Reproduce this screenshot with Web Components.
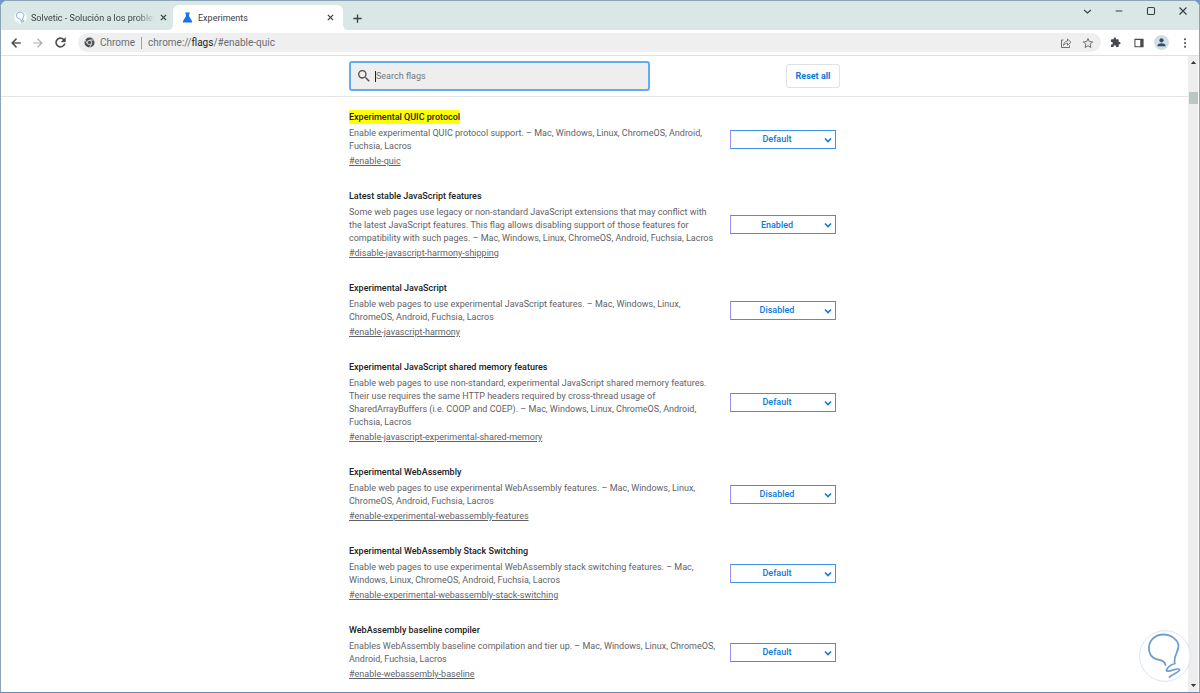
<!DOCTYPE html>
<html lang="es">
<head>
<meta charset="utf-8">
<title>Experiments</title>
<style>
    html, body {
        height: 100%;
        margin: 0;
        background: #6f97cb;
    }
    body {
        font-family: Roboto, "Liberation Sans", sans-serif;
        font-size: 9px;
        color: #5f6368;
        overflow: hidden;
    }
</style>
</head>
<body>
<browser-window>
    <tab-strip slot="tabs">
        <browser-tab icon="bulb">Solvetic - Solución a los problemas</browser-tab>
        <browser-tab icon="flask" active>Experiments</browser-tab>
    </tab-strip>
    <tool-bar slot="toolbar"></tool-bar>
    <flags-page>
        <flag-item name="Experimental QUIC protocol" anchor="enable-quic" value="Default" highlight>Enable experimental QUIC protocol support. – Mac, Windows, Linux, ChromeOS, Android, Fuchsia, Lacros</flag-item>
        <flag-item name="Latest stable JavaScript features" anchor="disable-javascript-harmony-shipping" value="Enabled">Some web pages use legacy or non-standard JavaScript extensions that may conflict with the latest JavaScript features. This flag allows disabling support of those features for compatibility with such pages. – Mac, Windows, Linux, ChromeOS, Android, Fuchsia, Lacros</flag-item>
        <flag-item name="Experimental JavaScript" anchor="enable-javascript-harmony" value="Disabled">Enable web pages to use experimental JavaScript features. – Mac, Windows, Linux, ChromeOS, Android, Fuchsia, Lacros</flag-item>
        <flag-item name="Experimental JavaScript shared memory features" anchor="enable-javascript-experimental-shared-memory" value="Default">Enable web pages to use non-standard, experimental JavaScript shared memory features. Their use requires the same HTTP headers required by cross-thread usage of SharedArrayBuffers (i.e. COOP and COEP). – Mac, Windows, Linux, ChromeOS, Android, Fuchsia, Lacros</flag-item>
        <flag-item name="Experimental WebAssembly" anchor="enable-experimental-webassembly-features" value="Disabled">Enable web pages to use experimental WebAssembly features. – Mac, Windows, Linux, ChromeOS, Android, Fuchsia, Lacros</flag-item>
        <flag-item name="Experimental WebAssembly Stack Switching" anchor="enable-experimental-webassembly-stack-switching" value="Default">Enable web pages to use experimental WebAssembly stack switching features. – Mac, Windows, Linux, ChromeOS, Android, Fuchsia, Lacros</flag-item>
        <flag-item name="WebAssembly baseline compiler" anchor="enable-webassembly-baseline" value="Default">Enables WebAssembly baseline compilation and tier up. – Mac, Windows, Linux, ChromeOS, Android, Fuchsia, Lacros</flag-item>
    </flags-page>
</browser-window>

<script>
const ICONS = {
    bulb: '<circle cx="12" cy="12" r="11.7" fill="#fff" fill-opacity=".8" stroke="#d5e2f0" stroke-width=".4"/><g transform="scale(.4615) translate(-18.500 -20)"><path d="M45 55C44 51 41 50 37 49.500 30 48 28 42 28.500 37 29 29 36 24.500 43 24.500 51 24.500 57 30 58 35 58.500 42 53.500 44 54 52L54.300 53.500C50 55 46.500 58 46 60.500 46.500 63 58 57 59 59.500 59.500 62 53 63.500 49 67" fill="none" stroke="#6f9fd1" stroke-width="STROKE" stroke-linecap="round"/></g>',
    flask: '<path d="M7 1h10v3h-1.500v5L22 20c.6 1.500 0 3-1.500 3h-17C2 23 1.400 21.500 2 20L8.500 9V4H7z" fill="#1a73e8"/>',
    close: '<path d="M5 5l14 14M19 5L5 19" stroke="currentColor" stroke-width="STROKE" fill="none"/>',
    plus: '<path d="M12 3v18M3 12h18" stroke="currentColor" stroke-width="3" fill="none"/>',
    down: '<path d="M3 8l9 8 9-8" stroke="currentColor" stroke-width="3" fill="none"/>',
    minimize: '<path d="M2 12h20" stroke="currentColor" stroke-width="3"/>',
    maximize: '<rect x="3.500" y="3.500" width="17" height="17" rx="3" stroke="currentColor" stroke-width="2.600" fill="none"/>',
    back: '<path d="M20 11H7.800l5.600-5.600L12 4l-8 8 8 8 1.400-1.400L7.800 13H20z" fill="currentColor" stroke="currentColor" stroke-width=".6"/>',
    forward: '<path d="M12 4l-1.400 1.400L16.200 11H4v2h12.200l-5.600 5.600L12 20l8-8z" fill="currentColor"/>',
    reload: '<path d="M17.700 6.300A8 8 0 1 0 19.700 14h-2.100A6 6 0 1 1 16.200 7.800L13 11h7V4z" fill="currentColor" stroke="currentColor" stroke-width=".6"/>',
    chrome: '<circle cx="12" cy="12" r="11" fill="#4d5156"/><circle cx="12" cy="12" r="5.400" fill="#efefef"/><circle cx="12" cy="12" r="3.700" fill="#4d5156"/><path d="M12 6.600h9.500M7.300 14.700L2.600 6.500M16.700 14.700L12 23" stroke="#efefef" stroke-width="1.800"/>',
    share: '<path d="M7 6H3v15h16v-4" fill="none" stroke="currentColor" stroke-width="2"/><path d="M7 17c.4-5 3-8.500 8-9V4l7 6.500-7 6V12.500c-3.500 0-6 1.500-8 4.500z" fill="none" stroke="currentColor" stroke-width="1.800" stroke-linejoin="round"/>',
    star: '<path d="M12 3l2.600 6.300 6.800.6-5.200 4.500 1.600 6.600-5.800-3.500L6.200 21l1.600-6.600-5.200-4.500 6.800-.6z" fill="none" stroke="currentColor" stroke-width="2"/>',
    puzzle: '<path d="M20.500 11H19V7a2 2 0 0 0-2-2h-4V3.500a2.500 2.500 0 0 0-5 0V5H4a2 2 0 0 0-2 2v3.800h1.500a2.700 2.700 0 0 1 0 5.400H2V20a2 2 0 0 0 2 2h3.800v-1.500a2.700 2.700 0 0 1 5.400 0V22H17a2 2 0 0 0 2-2v-4h1.500a2.500 2.500 0 0 0 0-5z" fill="currentColor"/>',
    panel: '<path d="M1 2h22v20H1zM3.500 4.500v15H15v-15z" fill="currentColor" fill-rule="evenodd"/>',
    user: '<circle cx="12" cy="12" r="12" fill="#cfe0e3"/><circle cx="12" cy="8.500" r="3.300" fill="#3b4a6b"/><path d="M5.500 18v-1.300c0-2.500 4-3.700 6.500-3.700s6.500 1.200 6.500 3.700V18z" fill="#3b4a6b"/>',
    menu: '<g fill="currentColor"><circle cx="12" cy="3" r="2.400"/><circle cx="12" cy="12" r="2.400"/><circle cx="12" cy="21" r="2.400"/></g>',
    search: '<path d="M15.500 14h-.8l-.3-.3A6.500 6.500 0 1 0 13.700 14.400l.3.3v.8l5 5 1.500-1.500zm-6 0a4.500 4.500 0 1 1 0-9 4.500 4.500 0 0 1 0 9z" fill="currentColor"/>',
    up: '<path d="M3 17l9-10 9 10z" fill="currentColor"/>',
    downFill: '<path d="M3 7l9 10 9-10z" fill="currentColor"/>'
};

function icon(name, size, stroke = 2.6) {
    return `<svg width="${size}" height="${size}" viewBox="0 0 24 24" aria-hidden="true">${ICONS[name].replace('STROKE', stroke)}</svg>`;
}

const BASE = `
    * { box-sizing: border-box; }
    svg { display: block; flex: none; }
    button {
        display: flex;
        align-items: center;
        justify-content: center;
        padding: 0;
        border: 0;
        background: none;
        color: inherit;
        font: inherit;
    }
`;

class BrowserWindow extends HTMLElement {
    constructor() {
        super();
        this.attachShadow({ mode: 'open' }).innerHTML = `
            <style>
                ${BASE}
                :host {
                    display: flex;
                    flex-direction: column;
                    box-sizing: border-box;
                    height: 100vh;
                    border: 1px solid #8ba5b7;
                    border-bottom-color: #6688b5;
                    border-radius: 7px 7px 0 0;
                    background: #fff;
                    overflow: hidden;
                }
                .view { flex: 1; min-height: 0; display: flex; }
                .page { flex: 1; min-width: 0; overflow: hidden; }
                .scroll {
                    display: flex;
                    flex-direction: column;
                    align-items: center;
                    width: 10px;
                    padding: 3px 0;
                    background: #eee;
                    color: #303540;
                    margin-right: 1px;
                }
                .thumb { width: 9px; height: 12px; margin: 26px 0 auto; background: #b9c6c3; }
                .mark { position: absolute; right: 9px; bottom: 11px; }
            </style>
            <slot name="tabs"></slot>
            <slot name="toolbar"></slot>
            <div class="view">
                <div class="page"><slot></slot></div>
                <div class="scroll">${icon('up', 7)}<div class="thumb"></div>${icon('downFill', 7)}</div>
            </div>
            <div class="mark">${icon('bulb', 52, 1.8)}</div>
        `;
    }
}

class TabStrip extends HTMLElement {
    constructor() {
        super();
        this.attachShadow({ mode: 'open' }).innerHTML = `
            <style>
                ${BASE}
                :host {
                    display: flex;
                    height: 29px;
                    background: #d9e7e6;
                    color: #3c4043;
                }
                .tabs { display: flex; align-items: flex-end; padding-left: 4px; }
                .new { width: 28px; padding-top: 5px; }
                .controls { display: flex; margin-left: auto; height: 20px; }
                .controls button { width: 32px; }
            </style>
            <div class="tabs"><slot></slot></div>
            <button class="new" aria-label="New tab">${icon('plus', 11)}</button>
            <div class="controls">
                <button aria-label="Search tabs">${icon('down', 9)}</button>
                <button aria-label="Minimize">${icon('minimize', 8)}</button>
                <button aria-label="Maximize">${icon('maximize', 10)}</button>
                <button aria-label="Close">${icon('close', 12, 2.4)}</button>
            </div>
        `;
    }
}

class BrowserTab extends HTMLElement {
    constructor() {
        super();
        this.attachShadow({ mode: 'open' });
    }

    connectedCallback() {
        this.shadowRoot.innerHTML = `
            <style>
                ${BASE}
                :host {
                    position: relative;
                    display: flex;
                    align-items: center;
                    box-sizing: border-box;
                    width: 168px;
                    height: 25px;
                    padding: 0 5px 0 9px;
                    gap: 4px;
                    border-radius: 6px 6px 0 0;
                    line-height: 12px;
                }
                :host([active]) { width: 170px; padding-right: 8px; gap: 5px; background: #fff; }
                :host([active])::before, :host([active])::after {
                    content: "";
                    position: absolute;
                    bottom: 0;
                    width: 5px;
                    height: 5px;
                }
                :host([active])::before { right: 100%; background: radial-gradient(circle at 0 0, transparent 5px, #fff 5px); }
                :host([active])::after { left: 100%; background: radial-gradient(circle at 100% 0, transparent 5px, #fff 5px); }
                span { flex: 1; overflow: hidden; white-space: nowrap; }
                :host(:not([active])) span { mask-image: linear-gradient(to left, transparent, #000 18px); }
                button { width: 9px; }
            </style>
            ${icon(this.getAttribute('icon'), this.getAttribute('icon') == 'bulb' ? 13 : 11, 3.4)}
            <span><slot></slot></span>
            <button aria-label="Close tab">${icon('close', 9, 3.4)}</button>
        `;
    }
}

class ToolBar extends HTMLElement {
    constructor() {
        super();
        this.attachShadow({ mode: 'open' }).innerHTML = `
            <style>
                ${BASE}
                :host {
                    display: flex;
                    align-items: center;
                    box-sizing: border-box;
                    height: 26px;
                    padding: 0 4px;
                    border-bottom: 1px solid #dfe1e3;
                    color: #46494d;
                    font-size: 10px;
                    line-height: 12px;
                }
                nav, .actions { display: flex; }
                nav button { width: 22px; }
                .off { color: #a9acb0; }
                .address {
                    flex: 1;
                    display: flex;
                    align-items: center;
                    height: 19px;
                    margin-left: 7px;
                    padding: 0 5px 0 6px;
                    border-radius: 10px;
                    background: #efefef;
                    color: #696d72;
                }
                .site { padding: 0 6px 0 5px; border-right: 1px solid #a0a3a6; }
                .url { flex: 1; padding-left: 6px; }
                b { font-weight: 400; color: #202124; }
                .address button { width: 16px; margin-left: 6px; }
                .actions button { width: 23px; }
                .actions { margin-left: 3px; margin-right: -1px; }
            </style>
            <nav>
                <button aria-label="Back">${icon('back', 14)}</button>
                <button class="off" aria-label="Forward">${icon('forward', 14)}</button>
                <button aria-label="Reload">${icon('reload', 15)}</button>
            </nav>
            <div class="address">
                ${icon('chrome', 11)}
                <span class="site">Chrome</span>
                <span class="url">chrome://<b>flags</b>/#enable-quic</span>
                <button aria-label="Share">${icon('share', 12)}</button>
                <button aria-label="Bookmark">${icon('star', 12)}</button>
            </div>
            <div class="actions">
                <button aria-label="Extensions">${icon('puzzle', 11)}</button>
                <button aria-label="Side panel">${icon('panel', 10)}</button>
                <button aria-label="Profile">${icon('user', 15)}</button>
                <button aria-label="Menu">${icon('menu', 10)}</button>
            </div>
        `;
    }
}

class FlagsPage extends HTMLElement {
    constructor() {
        super();
        this.attachShadow({ mode: 'open' }).innerHTML = `
            <style>
                ${BASE}
                :host { display: block; }
                header { padding: 5px 0; border-bottom: 1px solid #e4e5e7; }
                .bar, main { width: 491px; max-width: 100%; margin: 0 auto; }
                .bar { display: flex; align-items: center; justify-content: space-between; height: 30px; }
                .search {
                    display: flex;
                    align-items: center;
                    width: 301px;
                    height: 30px;
                    padding: 0 5px;
                    gap: 3px;
                    border: 2px solid #62acf0;
                    border-radius: 3px;
                    background: #eee;
                    color: #4a4d51;
                }
                input {
                    flex: 1;
                    min-width: 0;
                    padding: 0;
                    border: 0;
                    border-left: 1px solid #202124;
                    outline: 0;
                    background: none;
                    font: inherit;
                    line-height: 11px;
                }
                input::placeholder { color: #75787c; opacity: 1; }
                .reset {
                    width: 54px;
                    height: 24px;
                    border: 1px solid #dfe1e5;
                    border-radius: 3px;
                    color: #0b78db;
                    font-weight: 700;
                }
                main { padding-top: 13px; }
            </style>
            <header>
                <div class="bar">
                    <label class="search">${icon('search', 16)}<input type="text" placeholder="Search flags" aria-label="Search flags"></label>
                    <button class="reset">Reset all</button>
                </div>
            </header>
            <main><slot></slot></main>
        `;
    }
}

class FlagItem extends HTMLElement {
    constructor() {
        super();
        this.attachShadow({ mode: 'open' });
    }

    connectedCallback() {
        const name   = this.getAttribute('name');
        const anchor = this.getAttribute('anchor');
        const value  = this.getAttribute('value');
        const options = ['Default', 'Enabled', 'Disabled']
            .map(option => `<option${option == value ? ' selected' : ''}>${option}</option>`)
            .join('');

        this.shadowRoot.innerHTML = `
            <style>
                ${BASE}
                :host {
                    display: flex;
                    align-items: center;
                    justify-content: space-between;
                    padding-right: 4px;
                    margin-bottom: 21px;
                }
                .text { width: 372px; line-height: 13px; }
                label { display: table; line-height: 14px; font-weight: 500; color: #202124; }
                :host([highlight]) label { background: #ff0; }
                p { margin: 3px 0 1px; }
                a { display: table; line-height: 14px; color: inherit; text-decoration: underline; }
                .pick { position: relative; color: #0b78db; }
                select {
                    display: block;
                    width: 106px;
                    height: 19px;
                    padding: 0 12px 0 0;
                    appearance: none;
                    border: 1px solid #3d93e6;
                    border-left-color: #9a8ff0;
                    border-radius: 0;
                    background: #fff;
                    color: inherit;
                    font: inherit;
                    font-weight: 500;
                    text-align: center;
                    text-align-last: center;
                }
                .pick svg { position: absolute; right: 4px; top: 6px; pointer-events: none; }
            </style>
            <div class="text">
                <label for="state">${name}</label>
                <p><slot></slot></p>
                <a href="#${anchor}">#${anchor}</a>
            </div>
            <div class="pick">
                <select id="state">${options}</select>
                <svg width="8" height="8" viewBox="0 0 8 8" aria-hidden="true"><path d="M1 2.500l3 3 3-3" fill="none" stroke="currentColor" stroke-width="1.600"/></svg>
            </div>
        `;
    }
}

customElements.define('browser-window', BrowserWindow);
customElements.define('tab-strip', TabStrip);
customElements.define('browser-tab', BrowserTab);
customElements.define('tool-bar', ToolBar);
customElements.define('flags-page', FlagsPage);
customElements.define('flag-item', FlagItem);
</script>
</body>
</html>
